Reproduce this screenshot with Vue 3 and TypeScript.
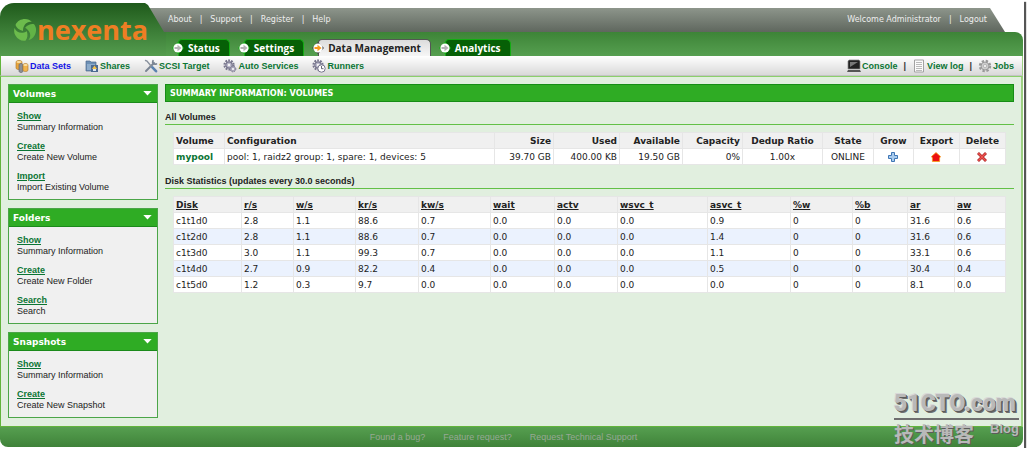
<script setup lang="ts">
interface Column {
  label: string
  width: number
  align?: string
}
interface Tool {
  label: string
  icon: string
  active?: boolean
}

const tabs = [
  { label: 'Status', active: false },
  { label: 'Settings', active: false },
  { label: 'Data Management', active: true },
  { label: 'Analytics', active: false },
]

const tools: Tool[] = [
  { label: 'Data Sets', icon: 'data', active: true },
  { label: 'Shares', icon: 'share' },
  { label: 'SCSI Target', icon: 'wrench' },
  { label: 'Auto Services', icon: 'gear' },
  { label: 'Runners', icon: 'runner' },
]

const panels = [
  {
    title: 'Volumes',
    items: [
      ['Show', 'Summary Information'],
      ['Create', 'Create New Volume'],
      ['Import', 'Import Existing Volume'],
    ],
  },
  {
    title: 'Folders',
    items: [
      ['Show', 'Summary Information'],
      ['Create', 'Create New Folder'],
      ['Search', 'Search'],
    ],
  },
  {
    title: 'Snapshots',
    items: [
      ['Show', 'Summary Information'],
      ['Create', 'Create New Snapshot'],
    ],
  },
]

const volumeColumns: Column[] = [
  { label: 'Volume', width: 51 },
  { label: 'Configuration', width: 270 },
  { label: 'Size', width: 59, align: 'right' },
  { label: 'Used', width: 66, align: 'right' },
  { label: 'Available', width: 63, align: 'right' },
  { label: 'Capacity', width: 60, align: 'right' },
  { label: 'Dedup Ratio', width: 80, align: 'center' },
  { label: 'State', width: 51, align: 'center' },
  { label: 'Grow', width: 40, align: 'center' },
  { label: 'Export', width: 46, align: 'center' },
  { label: 'Delete', width: 46, align: 'center' },
]

const diskColumns: Column[] = [
  { label: 'Disk', width: 68 },
  { label: 'r/s', width: 52 },
  { label: 'w/s', width: 62 },
  { label: 'kr/s', width: 63 },
  { label: 'kw/s', width: 72 },
  { label: 'wait', width: 64 },
  { label: 'actv', width: 63 },
  { label: 'wsvc_t', width: 90 },
  { label: 'asvc_t', width: 83 },
  { label: '%w', width: 62 },
  { label: '%b', width: 55 },
  { label: 'ar', width: 47 },
  { label: 'aw', width: 51 },
]

const disks = [
  ['c1t1d0', '2.8', '1.1', '88.6', '0.7', '0.0', '0.0', '0.0', '0.9', '0', '0', '31.6', '0.6'],
  ['c1t2d0', '2.8', '1.1', '88.6', '0.7', '0.0', '0.0', '0.0', '1.4', '0', '0', '31.6', '0.6'],
  ['c1t3d0', '3.0', '1.1', '99.3', '0.7', '0.0', '0.0', '0.0', '1.1', '0', '0', '33.1', '0.6'],
  ['c1t4d0', '2.7', '0.9', '82.2', '0.4', '0.0', '0.0', '0.0', '0.5', '0', '0', '30.4', '0.4'],
  ['c1t5d0', '1.2', '0.3', '9.7', '0.0', '0.0', '0.0', '0.0', '0.0', '0', '0', '8.1', '0.0'],
]

function share(columns: Column[], index: number): string {
  const total = columns.reduce((sum, column) => sum + column.width, 0)
  return (columns[index].width / total) * 100 + '%'
}
</script>

<template>
  <div class="frame">
    <header class="header">
      <div class="brand">
        <svg class="brand-mark" viewBox="0 0 24 24" aria-hidden="true">
          <path d="M2.5 7C4 3 8 1 12 1c3 0 5 1 7 3-5-1-9 3-9 9C6 12 3.5 10 2.5 7Z" fill="#6cbb4c" />
          <path d="M2.5 7C4 3 8 1 12 1c3 0 5 1 7 3-5-1-9 3-9 9C6 12 3.5 10 2.5 7Z" fill="#62b346" transform="rotate(120 12 12)" />
          <path d="M2.5 7C4 3 8 1 12 1c3 0 5 1 7 3-5-1-9 3-9 9C6 12 3.5 10 2.5 7Z" fill="#6cbb4c" transform="rotate(240 12 12)" />
        </svg>
        <span class="brand-name">nexenta</span>
      </div>
      <div class="bars">
        <div class="utility">
          <nav class="links">
            <a href="#about">About</a><span>|</span><a href="#support">Support</a><span>|</span><a href="#register">Register</a><span>|</span><a href="#help">Help</a>
          </nav>
          <div class="links">
            <span>Welcome Administrator</span><span>|</span><a href="#logout">Logout</a>
          </div>
        </div>
        <nav class="tabs">
          <a v-for="tab in tabs" :key="tab.label" href="#tab" class="tab" :class="{ active: tab.active }">
            <svg class="tab-dot" viewBox="0 0 12 12" aria-hidden="true">
              <path d="M6 0 12 6 6 12 0 6Z" :fill="tab.active ? '#444' : '#10b010'" />
              <circle cx="6" cy="6" r="4.6" fill="#fff" />
              <path d="M2.5 5h3V2.8L9.5 6l-4 3.2V7h-3Z" :fill="tab.active ? '#f79a1c' : '#b4b4b4'" />
            </svg>
            <span class="tab-label">{{ tab.label }}</span>
          </a>
        </nav>
      </div>
    </header>

    <div class="toolbar">
      <nav class="tools">
        <a v-for="tool in tools" :key="tool.label" href="#tool" class="tool" :class="{ current: tool.active }">
          <svg viewBox="0 0 14 14" aria-hidden="true">
            <g v-if="tool.icon === 'data'" stroke-width=".6">
              <path d="M1 3c0-2 6-2 6 0v6c0 2-6 2-6 0Z" fill="#e9a53c" stroke="#a8742a" />
              <path d="M4 6c0-2 4-2 4 0v6c0 2-4 2-4 0Z" fill="#8b8f96" stroke="#5d6068" />
              <path d="M8 6c0-2 5-2 5 0v5c0 2-5 2-5 0Z" fill="#f0b44e" stroke="#a8742a" />
              <ellipse cx="4" cy="3" rx="2.6" ry="1" fill="#fbe0a4" />
              <ellipse cx="10.5" cy="6" rx="2.2" ry=".9" fill="#fbe0a4" />
            </g>
            <g v-else-if="tool.icon === 'share'">
              <path d="M1 2h4l1 1h5v9H1Z" fill="#6c8fb4" stroke="#4d6c90" stroke-width=".7" />
              <path d="M2 5h8v6H2Z" fill="#8daccb" />
              <path d="M6 6h7v7H6Z" fill="#4c6a92" />
              <path d="M9.5 6.5 12 10H7Z" fill="#f2c24b" />
              <path d="M8 10h3v2H8Z" fill="#dfe8f2" />
            </g>
            <g v-else-if="tool.icon === 'wrench'" fill="none" stroke-linecap="round">
              <path d="M2 12 10 4" stroke="#7b8594" stroke-width="2" />
              <path d="M9 1.8c-1 2 .5 4 3.4 3.2" stroke="#7b8594" stroke-width="1.8" />
              <path d="M1.5 1.5 3 2l4 5" stroke="#8a929e" stroke-width="1.4" />
              <path d="m8.4 8.4 3.6 3.8" stroke="#5b82b0" stroke-width="2.6" />
            </g>
            <g v-else>
              <circle cx="6" cy="6" r="4.6" fill="none" stroke="#77758c" stroke-width="2" stroke-dasharray="1.8 1.1" />
              <circle cx="6" cy="6" r="3.2" fill="#b9b7c9" stroke="#77758c" stroke-width="1.2" />
              <circle cx="6" cy="6" r="1.2" fill="#f4f4f4" />
              <g v-if="tool.icon === 'gear'">
                <circle cx="10" cy="10" r="2.8" fill="#a9a7ba" stroke="#77758c" stroke-dasharray="1.3 .7" />
                <circle cx="10" cy="10" r="1" fill="#fff" />
              </g>
              <g v-else>
                <circle cx="9.5" cy="9.5" r="3.7" fill="#fff" stroke="#77758c" />
                <path d="M9.5 7v2.7h2" fill="none" stroke="#556" stroke-width=".9" />
              </g>
            </g>
          </svg>{{ tool.label }}
        </a>
      </nav>
      <div class="tools side">
        <a href="#console" class="tool">
          <svg viewBox="0 0 14 14" aria-hidden="true">
            <path d="M2 1h10l1 1v8H1V2Z" fill="#222" stroke="#888" stroke-width=".7" />
            <path d="M3 3h8L3 8Z" fill="#777" />
            <path d="M1 11h12l1 2H0Z" fill="#555" />
          </svg>Console
        </a>
        <span class="bar">|</span>
        <a href="#log" class="tool">
          <svg viewBox="0 0 14 14" aria-hidden="true">
            <path d="M2.5 1h9v12h-9Z" fill="#fbfbfb" stroke="#a2a2a2" />
            <path d="M4 3.5h6M4 5.5h6M4 7.5h6M4 9.5h6M4 11.5h6" stroke="#aaa" stroke-width=".8" />
          </svg>View log
        </a>
        <span class="bar">|</span>
        <a href="#jobs" class="tool">
          <svg viewBox="0 0 14 14" aria-hidden="true">
            <circle cx="7" cy="7" r="5.2" fill="none" stroke="#999" stroke-width="2" stroke-dasharray="2.4 1.7" />
            <circle cx="7" cy="7" r="4" fill="#ccc" stroke="#9a9a9a" />
            <circle cx="7" cy="7" r="1.5" fill="#fff" stroke="#999" stroke-width=".6" />
          </svg>Jobs
        </a>
      </div>
    </div>

    <div class="body">
      <aside class="sidebar">
        <section v-for="panel in panels" :key="panel.title" class="panel">
          <h2 class="panel-head">
            {{ panel.title }}
            <svg viewBox="0 0 10 6" aria-hidden="true"><path d="M0 0h10L5 5.5Z" fill="#fff" /></svg>
          </h2>
          <ul class="panel-list">
            <li v-for="item in panel.items" :key="item[0]">
              <a href="#item">{{ item[0] }}</a>
              <span>{{ item[1] }}</span>
            </li>
          </ul>
        </section>
      </aside>

      <main class="main">
        <h1 class="title">SUMMARY INFORMATION: VOLUMES</h1>

        <section class="block">
          <h2 class="block-head">All Volumes</h2>
          <table class="grid volumes">
            <colgroup>
              <col v-for="(column, i) in volumeColumns" :key="i" :style="{ width: share(volumeColumns, i) }" />
            </colgroup>
            <thead>
              <tr>
                <th v-for="column in volumeColumns" :key="column.label" :class="column.align">{{ column.label }}</th>
              </tr>
            </thead>
            <tbody>
              <tr>
                <td><a href="#mypool" class="pool">mypool</a></td>
                <td>pool: 1, raidz2 group: 1, spare: 1, devices: 5</td>
                <td class="right">39.70 GB</td>
                <td class="right">400.00 KB</td>
                <td class="right">19.50 GB</td>
                <td class="right">0%</td>
                <td class="center">1.00x</td>
                <td class="center">ONLINE</td>
                <td class="center">
                  <button type="button" aria-label="Grow mypool">
                    <svg viewBox="0 0 10 10"><path d="M3.5.5h3v3h3v3h-3v3h-3v-3h-3v-3h3Z" fill="#a9cbed" stroke="#3f76b5" /></svg>
                  </button>
                </td>
                <td class="center">
                  <button type="button" aria-label="Export mypool">
                    <svg viewBox="0 0 10 10"><path d="M5 .5 9.5 4.5 8.6 6v3.5H1.4V6L.5 4.5Z" fill="#ec1010" stroke="#f7a21b" stroke-width=".8" /></svg>
                  </button>
                </td>
                <td class="center">
                  <button type="button" aria-label="Delete mypool">
                    <svg viewBox="0 0 10 10"><path d="m1 1 8 8M9 1 1 9" stroke="#a61f1f" stroke-width="2.8" /><path d="m1.3 1.3 7.4 7.4M8.7 1.3 1.3 8.7" stroke="#ee5350" stroke-width="1.5" /></svg>
                  </button>
                </td>
              </tr>
            </tbody>
          </table>
        </section>

        <section class="block">
          <h2 class="block-head">Disk Statistics (updates every 30.0 seconds)</h2>
          <table class="grid disks">
            <colgroup>
              <col v-for="(column, i) in diskColumns" :key="i" :style="{ width: share(diskColumns, i) }" />
            </colgroup>
            <thead>
              <tr>
                <th v-for="column in diskColumns" :key="column.label"><a href="#sort">{{ column.label }}</a></th>
              </tr>
            </thead>
            <tbody>
              <tr v-for="disk in disks" :key="disk[0]">
                <td v-for="(value, i) in disk" :key="i">{{ value }}</td>
              </tr>
            </tbody>
          </table>
        </section>
      </main>
    </div>

    <footer class="footer">
      <a href="#bug">Found a bug?</a>
      <a href="#feature">Feature request?</a>
      <a href="#support">Request Technical Support</a>
    </footer>

    <div class="watermark">
      <div class="mark-top">51CTO.com</div>
      <div class="mark-bottom"><span class="mark-cjk">技术博客</span><span class="mark-blog">Blog</span></div>
    </div>
  </div>
</template>

<style>
body {
  background: #fff;
}
</style>

<style scoped>
* {
  box-sizing: border-box;
}
.frame {
  position: relative;
  display: flex;
  flex-direction: column;
  min-height: calc(100vh - 4px);
  margin-right: 4px;
  padding: 3px 1px 1px 0;
  background: #fff;
  box-shadow: 2px 2px 1px #555;
  font-family: "Liberation Sans", Arial, sans-serif;
  font-size: 9px;
  font-variant-ligatures: none;
  color: #222;
}
a {
  color: inherit;
  text-decoration: none;
}
h1,
h2,
ul {
  margin: 0;
  padding: 0;
}
.header {
  display: flex;
}
.brand {
  position: relative;
  z-index: 1;
  display: flex;
  align-items: center;
  flex: none;
  width: 166px;
  height: 53px;
  margin-right: -20px;
  padding-left: 13px;
  border-top-left-radius: 14px;
  background: linear-gradient(#1f5a1b, #3d7f38 55%, #549c4e);
  clip-path: polygon(0 0, 145px 0, 148px 2px, 164px 29px, 166px 29px, 166px 100%, 0 100%);
}
.brand-mark {
  width: 24px;
  height: 24px;
}
.brand-name {
  font: bold 27px/32px "Open Sans", "Noto Sans", sans-serif;
  color: #ee7e23;
}
.bars {
  flex: 1;
  padding-top: 5px;
}
.utility {
  display: flex;
  justify-content: space-between;
  align-items: center;
  height: 24px;
  margin-right: 18px;
  padding: 0 18px 0 22px;
  background: linear-gradient(#8d958b, #5f675e);
  clip-path: polygon(0 0, calc(100% - 15px) 0, 100% 100%, 0 100%);
  font: 8px/12px "DejaVu Sans", Verdana, sans-serif;
  color: #eee;
}
.links {
  display: flex;
  gap: 8px;
}
.tabs {
  display: flex;
  align-items: flex-end;
  gap: 8px;
  height: 24px;
  padding-left: 26px;
  border-top-right-radius: 8px;
  background: linear-gradient(#3d8437, #569f50);
}
.tab {
  display: flex;
  align-items: center;
  color: #fff;
  font: bold 10px/16px "Open Sans", "Noto Sans", sans-serif;
}
.tab-dot {
  position: relative;
  width: 12px;
  height: 12px;
  margin-right: -6px;
}
.tab-label {
  height: 17px;
  padding: 0 9px;
  border: 1px solid #12ad12;
  border-bottom: 0;
  border-radius: 4px 5px 0 0;
  background: #066006;
}
.active {
  color: #222;
}
.active .tab-label {
  border-color: #555;
  background: linear-gradient(#dcdcdc, #f6f6f6);
}
.toolbar {
  display: flex;
  justify-content: space-between;
  align-items: center;
  height: 20px;
  padding: 0 8px 0 14px;
  border-left: 1px solid #62b43c;
  border-right: 1px solid #9ccf82;
  border-bottom: 1px solid #c4c4c4;
  background: linear-gradient(#fff, #d9d9d9);
  font-weight: bold;
  color: #0b7534;
}
.tools {
  display: flex;
  align-items: center;
  gap: 14px;
}
.side {
  gap: 6px;
}
.tool {
  display: flex;
  align-items: center;
  gap: 1px;
}
.tool svg {
  width: 14px;
  height: 14px;
}
.current {
  color: #1414e6;
}
.bar {
  color: #333;
}
.body {
  display: flex;
  flex: 1;
  align-items: flex-start;
  gap: 7px;
  padding: 7px;
  border: 1px solid #62b43c;
  border-top-color: #8bcf6c;
  border-right: 2px solid #9ccf82;
  background: #e1efdf;
}
.sidebar {
  display: flex;
  flex: none;
  flex-direction: column;
  gap: 8px;
  width: 150px;
}
.panel {
  border: 1px solid #4ba548;
  background: #f0f0f0;
}
.panel-head {
  display: flex;
  align-items: center;
  justify-content: space-between;
  height: 18px;
  padding: 0 5px 0 4px;
  border-bottom: 1px solid #1b8a1b;
  background: #2fac24;
  font: bold 9px/16px "DejaVu Sans", Verdana, sans-serif;
  color: #fff;
}
.panel-head svg {
  width: 9px;
  height: 5px;
}
.panel-list {
  display: grid;
  gap: 8px;
  padding: 8px 8px 6px;
  list-style: none;
  line-height: 11px;
}
.panel-list a {
  display: block;
  width: max-content;
  font-weight: bold;
  text-decoration: underline;
  color: #0b7534;
}
.panel-list span {
  display: block;
}
.main {
  flex: 1;
  min-width: 0;
}
.title {
  height: 18px;
  padding: 0 4px;
  border: 1px solid #168d16;
  background: #2fac24;
  font: bold 9px/16px "DejaVu Sans Condensed", Verdana, sans-serif;
  color: #fff;
}
.block-head {
  padding-top: 8px;
  border-bottom: 1px solid #62c046;
  font-size: 9px;
  line-height: 14px;
}
.block {
  padding-bottom: 1px;
}
.grid {
  width: calc(100% - 16px);
  margin: 7px 8px 0;
  border-collapse: collapse;
  table-layout: fixed;
  font: 9px/12px "DejaVu Sans", Verdana, sans-serif;
  font-variant-ligatures: none;
}
.grid th,
.grid td {
  height: 16px;
  padding: 0 2px;
  border: 1px solid #e6e6e6;
  text-align: left;
  white-space: nowrap;
}
.grid th {
  background: #f0f0f0;
}
.grid td {
  background: #fff;
}
.grid th a {
  text-decoration: underline;
}
.disks tbody tr:nth-child(even) td {
  background: #ebf2fe;
}
.grid .right {
  text-align: right;
}
.grid .center {
  text-align: center;
}
.pool {
  font-weight: bold;
  color: #0b7534;
}
.grid button {
  display: block;
  width: 10px;
  height: 10px;
  margin: 0 auto;
  padding: 0;
  border: 0;
  background: none;
}
.grid button svg {
  display: block;
  width: 10px;
  height: 10px;
}
.footer {
  display: flex;
  justify-content: center;
  align-items: center;
  gap: 18px;
  height: 20px;
  padding-right: 16px;
  border-radius: 0 0 8px 8px;
  background: linear-gradient(#569f50, #3f8239);
  color: #96a894;
}
.watermark {
  position: absolute;
  right: 5px;
  bottom: 0;
  width: 125px;
  color: #b9b9b9;
  text-shadow: 1px 1px 0 #5c5c5c;
}
.mark-top {
  border-bottom: 2px solid #6e6e6e;
  font: 900 23px/28px Roboto, "Liberation Sans", sans-serif;
  text-shadow: -1px -1px 0 #d8d8d8, 1px 1px 0 #5c5c5c, 2px 2px 0 #6e6e6e;
}
.mark-bottom {
  display: flex;
  justify-content: space-between;
  font: bold 20px/28px "Noto Sans CJK SC", sans-serif;
}
.mark-blog {
  font: bold 13px/18px "Liberation Sans", sans-serif;
}
</style>
